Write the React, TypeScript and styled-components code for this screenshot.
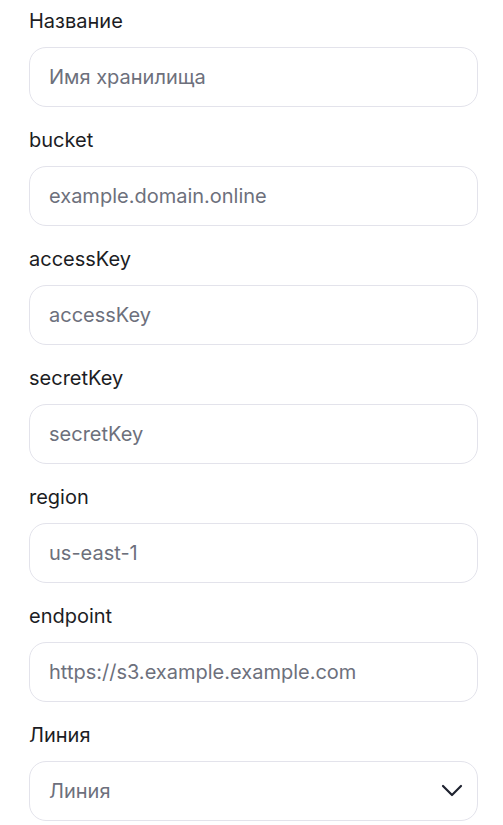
import React from "react";
import styled, { createGlobalStyle } from "styled-components";

const GlobalStyle = createGlobalStyle`
    body {
        margin: 0;
        background: #ffffff;
        font-family: Inter, "Noto Sans", sans-serif;
    }
`

const Form = styled.div`
    display: flex;
    flex-direction: column;
    gap: 19px;
    padding: 7px 25px 0 29px;
`

const Field = styled.label`
    display: flex;
    flex-direction: column;
    gap: 12px;
`

const Label = styled.span`
    font-size: 20px;
    line-height: 28px;
    color: #1c1d24;
`

const Input = styled.input`
    box-sizing: border-box;
    width: 100%;
    height: 60px;
    padding: 0 19px;
    border: 1px solid #e3e3eb;
    border-radius: 17px;
    background: #ffffff;
    font-family: inherit;
    font-size: 20px;
    color: #1c1d24;
    outline: none;

    &::placeholder {
        color: #6d707c;
    }
`

const SelectBox = styled.div`
    box-sizing: border-box;
    display: flex;
    align-items: center;
    justify-content: space-between;
    height: 60px;
    padding: 0 14px 0 19px;
    border: 1px solid #e3e3eb;
    border-radius: 17px;
    background: #ffffff;
    font-size: 20px;
    color: #6d707c;
    cursor: pointer;
`

const fields = [
    { label: "Название", placeholder: "Имя хранилища" },
    { label: "bucket", placeholder: "example.domain.online" },
    { label: "accessKey", placeholder: "accessKey" },
    { label: "secretKey", placeholder: "secretKey" },
    { label: "region", placeholder: "us-east-1" },
    { label: "endpoint", placeholder: "https://s3.example.example.com" },
];

const Chevron = () => (
    <svg width="22" height="14" viewBox="0 0 22 14" fill="none">
        <polyline points="2,2 11,11 20,2" stroke="#1f2330" strokeWidth="2.2" strokeLinecap="round" strokeLinejoin="round" />
    </svg>
);

export default function App() {
    return (
        <>
            <GlobalStyle />
            <Form>
                {fields.map((f) => (
                    <Field key={f.label}>
                        <Label>{f.label}</Label>
                        <Input placeholder={f.placeholder} />
                    </Field>
                ))}
                <Field>
                    <Label>Линия</Label>
                    <SelectBox>
                        Линия
                        <Chevron />
                    </SelectBox>
                </Field>
            </Form>
        </>
    );
}
